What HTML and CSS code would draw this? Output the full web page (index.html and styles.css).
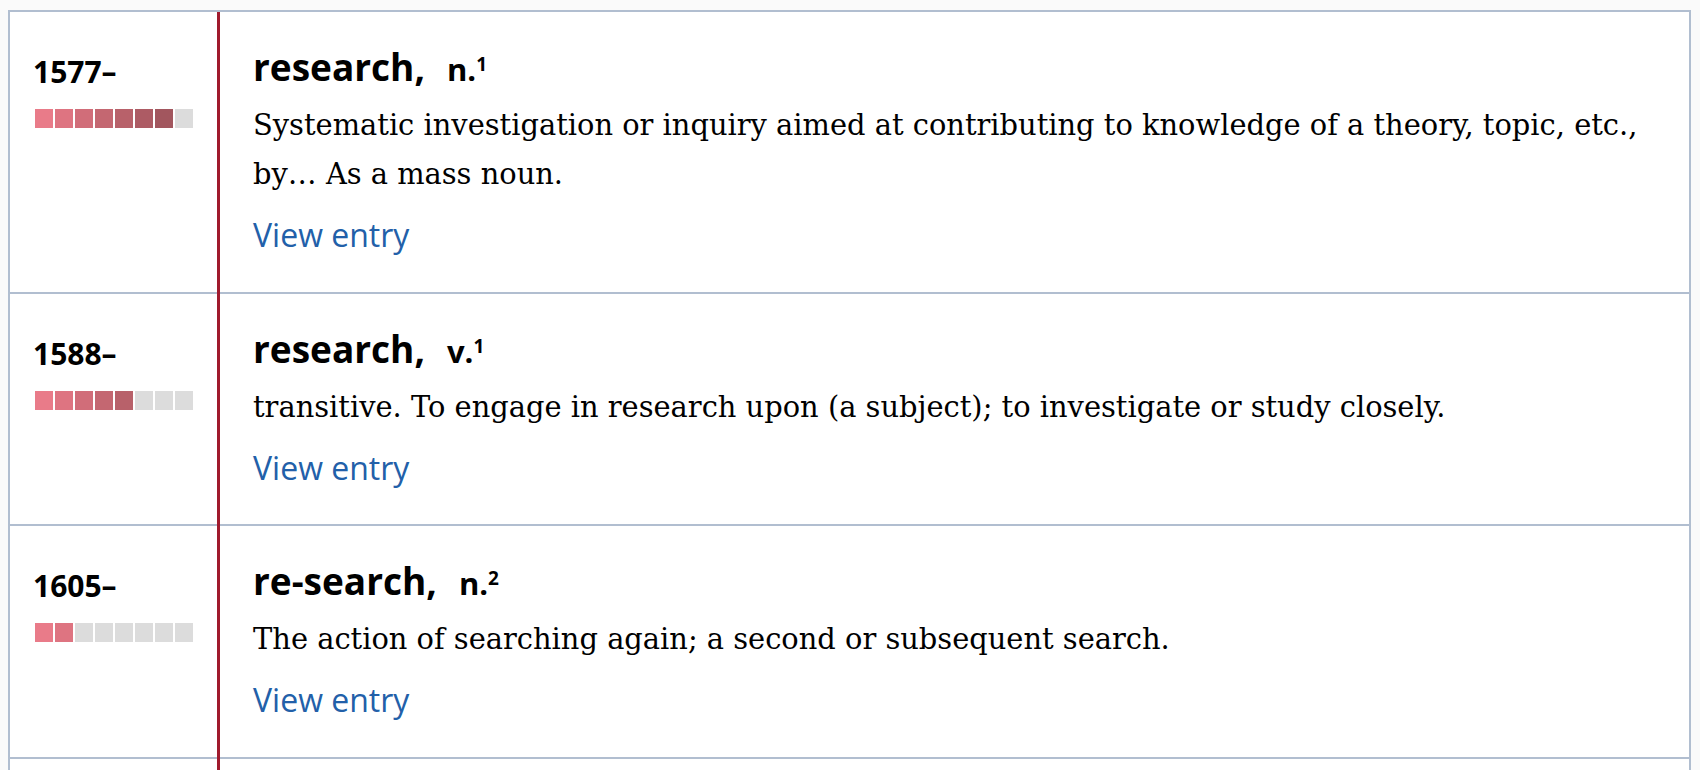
FILE: index.html
```html
<!DOCTYPE html>
<html lang="en">
<head>
<meta charset="utf-8">
<title>research – entries</title>
<link rel="stylesheet" href="styles.css">
</head>
<body>
<div class="entries">
  <div class="entry">
    <div class="meta">
      <div class="year">1577–</div>
      <div class="freq">
        <span class="b b1"></span><span class="b b2"></span><span class="b b3"></span><span class="b b4"></span><span class="b b5"></span><span class="b b6"></span><span class="b b7"></span><span class="b"></span>
      </div>
    </div>
    <div class="main">
      <h3 class="hw">research,<span class="pos">n.<sup>1</sup></span></h3>
      <p class="def">Systematic investigation or inquiry aimed at contributing to knowledge of a theory, topic, etc., by… As a mass noun.</p>
      <a class="view" href="#">View entry</a>
    </div>
  </div>
  <div class="entry">
    <div class="meta">
      <div class="year">1588–</div>
      <div class="freq">
        <span class="b b1"></span><span class="b b2"></span><span class="b b3"></span><span class="b b4"></span><span class="b b5"></span><span class="b"></span><span class="b"></span><span class="b"></span>
      </div>
    </div>
    <div class="main">
      <h3 class="hw">research,<span class="pos">v.<sup>1</sup></span></h3>
      <p class="def">transitive. To engage in research upon (a subject); to investigate or study closely.</p>
      <a class="view" href="#">View entry</a>
    </div>
  </div>
  <div class="entry">
    <div class="meta">
      <div class="year">1605–</div>
      <div class="freq">
        <span class="b b1"></span><span class="b b2"></span><span class="b"></span><span class="b"></span><span class="b"></span><span class="b"></span><span class="b"></span><span class="b"></span>
      </div>
    </div>
    <div class="main">
      <h3 class="hw">re-search,<span class="pos">n.<sup>2</sup></span></h3>
      <p class="def">The action of searching again; a second or subsequent search.</p>
      <a class="view" href="#">View entry</a>
    </div>
  </div>
  <div class="entry">
    <div class="meta">
      <div class="year">1615–</div>
      <div class="freq">
        <span class="b b1"></span><span class="b b2"></span><span class="b b3"></span><span class="b b4"></span><span class="b"></span><span class="b"></span><span class="b"></span><span class="b"></span>
      </div>
    </div>
    <div class="main">
      <h3 class="hw">researcher,<span class="pos">n.</span></h3>
      <p class="def">A person who carries out research.</p>
      <a class="view" href="#">View entry</a>
    </div>
  </div>
</div>
</body>
</html>
```

FILE: styles.css
```css
html, body {
  margin: 0;
  background: #fafafa;
}

body {
  padding: 10px 9px 0 8px;
}

.entries {
  position: relative;
  background: #fff;
  border: 2px solid #b1bed0;
  border-bottom: none;
}

.entries::before {
  content: "";
  position: absolute;
  top: 0;
  bottom: 0;
  left: 207px;
  width: 3px;
  background: #a01a2d;
}

.entry {
  display: grid;
  grid-template-columns: 210px 1fr;
  border-bottom: 2px solid #b1bed0;
}

.meta {
  padding: 42px 0 0 25px;
}

.year {
  margin-left: -2px;
  font: 700 30px/36px "Open Sans", sans-serif;
  color: #000;
}

.freq {
  display: flex;
  gap: 2px;
  margin-top: 19px;
}

.b {
  width: 18px;
  height: 19px;
  background: #dcdcdc;
}

.b1 { background: #e97b89; }
.b2 { background: #de7481; }
.b3 { background: #d16d79; }
.b4 { background: #c46771; }
.b5 { background: #b8616a; }
.b6 { background: #ad5b64; }
.b7 { background: #a2565e; }

.main {
  padding: 31px 10px 34.5px 33px;
}

.hw {
  margin: 0;
  font: 700 37px/48px "Open Sans", sans-serif;
  color: #000;
}

.pos {
  margin-left: 22px;
  font-size: 31px;
  line-height: 1;
}

.pos sup {
  font-size: 19px;
  line-height: 0;
  vertical-align: 10px;
}

.def {
  margin: 10px 0 0;
  font: 400 28.9px/49px "DejaVu Serif", serif;
  color: #000;
}

.view {
  display: block;
  margin-top: 13px;
  font: 400 32px/45px "Open Sans", sans-serif;
  color: #2260a9;
  text-decoration: none;
}
```
